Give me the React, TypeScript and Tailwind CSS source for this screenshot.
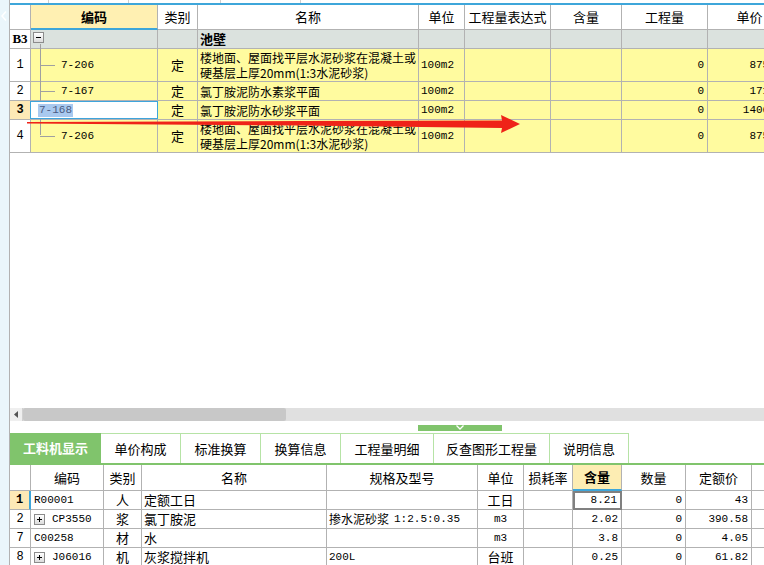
import React from 'react';

const cjk = "font-['Noto_Sans_CJK_SC',sans-serif]";
const mono = "font-['Liberation_Mono','Noto_Sans_CJK_SC',monospace]";
const cell = 'shrink-0 border-r border-b border-[#b2b2b2]';

type TopRow = {
  no: string;
  code: string;
  name: string[];
  h: string;
  price: string;
  editing?: boolean;
  last?: boolean;
};

const topRows: TopRow[] = [
  { no: '1', code: '7-206', name: ['楼地面、屋面找平层水泥砂浆在混凝土或', '硬基层上厚20mm(1:3水泥砂浆)'], h: 'h-[33px]', price: '875.47' },
  { no: '2', code: '7-167', name: ['氯丁胺泥防水素浆平面'], h: 'h-[19px]', price: '171.62' },
  { no: '3', code: '7-168', name: ['氯丁胺泥防水砂浆平面'], h: 'h-[19px]', price: '1406.38', editing: true },
  { no: '4', code: '7-206', name: ['楼地面、屋面找平层水泥砂浆在混凝土或', '硬基层上厚20mm(1:3水泥砂浆)'], h: 'h-[33px]', price: '875.47', last: true },
];

type BottomRow = {
  no: string;
  code: string;
  plus?: boolean;
  kind: string;
  name: string;
  spec: string;
  unit: string;
  monoUnit?: boolean;
  amount: string;
  price: string;
  active?: boolean;
};

const bottomRows: BottomRow[] = [
  { no: '1', code: 'R00001', kind: '人', name: '定额工日', spec: '', unit: '工日', amount: '8.21', price: '43', active: true },
  { no: '2', code: 'CP3550', plus: true, kind: '浆', name: '氯丁胺泥', spec: '掺水泥砂浆 1:2.5:0.35', unit: 'm3', monoUnit: true, amount: '2.02', price: '390.58' },
  { no: '7', code: 'C00258', kind: '材', name: '水', spec: '', unit: 'm3', monoUnit: true, amount: '3.8', price: '4.05' },
  { no: '8', code: 'J06016', plus: true, kind: '机', name: '灰浆搅拌机', spec: '200L', unit: '台班', amount: '0.25', price: '61.82' },
];

const tabs = [
  { label: '工料机显示', w: 'w-[91px]' },
  { label: '单价构成', w: 'w-[80px]' },
  { label: '标准换算', w: 'w-[80px]' },
  { label: '换算信息', w: 'w-[80px]' },
  { label: '工程量明细', w: 'w-[93px]' },
  { label: '反查图形工程量', w: 'w-[116px]' },
  { label: '说明信息', w: 'w-[79px]' },
];

const Box = ({ plus }: { plus?: boolean }) => (
  <span className="relative inline-block w-[11px] h-[11px] shrink-0 border border-[#8c8c8c] bg-gradient-to-b from-white to-[#dcdcdc]">
    <span className="absolute left-[2px] top-[4px] w-[5px] h-px bg-black" />
    {plus && <span className="absolute left-[4px] top-[2px] w-px h-[5px] bg-black" />}
  </span>
);

const TopTable = () => (
  <div className={`${cjk} text-[12px] text-black`}>
    <div className="flex h-[25px] bg-white">
      <div className={`w-[21px] ${cell}`} />
      <div className="w-[127px] shrink-0 border-r border-r-[#b2b2b2] border-b-2 border-b-[#3ea6da] bg-[#fff0b2] flex items-center justify-center text-[13px] font-bold">编码</div>
      <div className={`w-[40px] ${cell} flex items-center justify-center text-[13px]`}>类别</div>
      <div className={`w-[221px] ${cell} flex items-center justify-center text-[13px]`}>名称</div>
      <div className={`w-[46px] ${cell} flex items-center justify-center text-[13px]`}>单位</div>
      <div className={`w-[86px] ${cell} flex items-center justify-center text-[13px]`}>工程量表达式</div>
      <div className={`w-[71px] ${cell} flex items-center justify-center text-[13px]`}>含量</div>
      <div className={`w-[86px] ${cell} flex items-center justify-center text-[13px]`}>工程量</div>
      <div className={`w-[84px] ${cell} flex items-center justify-center text-[13px]`}>单价</div>
    </div>

    <div className="flex h-[19px] bg-[#dbe2de]">
      <div className={`w-[21px] ${cell} bg-white flex items-center justify-center font-['Liberation_Serif',serif] font-bold text-[13px]`}>B3</div>
      <div className={`relative w-[127px] ${cell}`}>
        <span className="absolute left-[2px] top-[2px] flex">
          <Box />
        </span>
        <span className="absolute left-[9px] top-[14px] bottom-[-1px] w-px bg-[#a0a0a0]" />
      </div>
      <div className={`w-[40px] ${cell}`} />
      <div className={`w-[221px] ${cell} flex items-center pl-[2px] font-bold text-[13px]`}>池壁</div>
      <div className={`w-[46px] ${cell}`} />
      <div className={`w-[86px] ${cell}`} />
      <div className={`w-[71px] ${cell}`} />
      <div className={`w-[86px] ${cell}`} />
      <div className={`w-[84px] ${cell}`} />
    </div>

    {topRows.map((r) => (
      <div key={r.no} className={`flex ${r.h} bg-[#fffb9f]`}>
        <div className={`w-[21px] ${cell} flex items-center justify-center ${mono} text-[12px] ${r.editing ? 'bg-[#fde9b6] font-bold' : 'bg-white'}`}>{r.no}</div>
        {r.editing ? (
          <div className="w-[127px] shrink-0 border-b border-[#b2b2b2]">
            <div className="h-full -ml-px border border-[#3ea4dc] bg-white flex items-center pl-[7px]">
              <span className={`${mono} text-[11px] leading-[13px] px-[1px] bg-[#a9c9ef] text-[#4b5b82]`}>{r.code}</span>
            </div>
          </div>
        ) : (
          <div className={`relative w-[127px] ${cell} flex items-center pl-[30px] ${mono} text-[11px]`}>
            <span className={`absolute left-[9px] top-[-1px] w-px bg-[#a0a0a0] ${r.last ? 'h-1/2' : 'bottom-[-1px]'}`} />
            <span className="absolute left-[9px] top-1/2 w-[15px] h-px bg-[#a0a0a0]" />
            {r.code}
          </div>
        )}
        <div className={`w-[40px] ${cell} flex items-center justify-center text-[13px]`}>定</div>
        <div className={`w-[221px] ${cell} flex flex-col justify-center pl-[2px] leading-[15px] whitespace-nowrap overflow-hidden`}>
          {r.name.map((n) => (
            <span key={n} className="block h-[15px]">{n}</span>
          ))}
        </div>
        <div className={`w-[46px] ${cell} flex items-center pl-[2px] ${mono} text-[11px]`}>100m2</div>
        <div className={`w-[86px] ${cell}`} />
        <div className={`w-[71px] ${cell}`} />
        <div className={`w-[86px] ${cell} flex items-center justify-end pr-[3px] ${mono} text-[11px]`}>0</div>
        <div className={`w-[84px] ${cell} flex items-center justify-end pr-[2px] ${mono} text-[11px]`}>{r.price}</div>
      </div>
    ))}
  </div>
);

const BottomTable = () => (
  <div className={`${cjk} text-[13px] text-black`}>
    <div className="flex h-[26px] bg-white">
      <div className={`w-[21px] ${cell}`} />
      <div className={`w-[73px] ${cell} flex items-center justify-center`}>编码</div>
      <div className={`w-[38px] ${cell} flex items-center justify-center`}>类别</div>
      <div className={`w-[185px] ${cell} flex items-center justify-center`}>名称</div>
      <div className={`w-[151px] ${cell} flex items-center justify-center`}>规格及型号</div>
      <div className={`w-[46px] ${cell} flex items-center justify-center`}>单位</div>
      <div className={`w-[49px] ${cell} flex items-center justify-center`}>损耗率</div>
      <div className="w-[49px] shrink-0 border-r border-r-[#b2b2b2] border-b-2 border-b-[#3ea6da] bg-[#fdedb3] flex items-center justify-center font-bold">含量</div>
      <div className={`w-[64px] ${cell} flex items-center justify-center`}>数量</div>
      <div className={`w-[66px] ${cell} flex items-center justify-center`}>定额价</div>
      <div className={`w-[40px] ${cell}`} />
    </div>
    {bottomRows.map((r) => (
      <div key={r.no} className="flex h-[19px] bg-white">
        <div className={`w-[21px] shrink-0 border-b border-[#b2b2b2] flex items-center justify-center ${mono} text-[12px] ${r.active ? 'bg-[#fde9b6] font-bold border-r-2 border-r-[#3ea6da]' : 'border-r'}`}>{r.no}</div>
        <div className={`w-[73px] ${cell} flex items-center gap-[7px] pl-[3px] ${mono} text-[11px]`}>
          {r.plus && <Box plus />}
          {r.code}
        </div>
        <div className={`w-[38px] ${cell} flex items-center justify-center`}>{r.kind}</div>
        <div className={`w-[185px] ${cell} flex items-center pl-[2px]`}>{r.name}</div>
        <div className={`w-[151px] ${cell} flex items-center pl-[2px] text-[12px] whitespace-nowrap`}>
          {r.spec.split(' ').map((s, i) => (
            <span key={s} className={i > 0 || s === '200L' ? `${mono} text-[11px] ml-[5px] first:ml-0` : ''}>{s}</span>
          ))}
        </div>
        <div className={`w-[46px] ${cell} flex items-center justify-center ${r.monoUnit ? `${mono} text-[11px]` : ''}`}>{r.unit}</div>
        <div className={`w-[49px] ${cell}`} />
        <div className={`w-[49px] shrink-0 flex items-center justify-end pr-[3px] ${mono} text-[11px] ${r.active ? 'border-2 border-[#808080]' : 'border-r border-b border-[#b2b2b2]'}`}>{r.amount}</div>
        <div className={`w-[64px] ${cell} flex items-center justify-end pr-[3px] ${mono} text-[11px]`}>0</div>
        <div className={`w-[66px] ${cell} flex items-center justify-end pr-[3px] ${mono} text-[11px]`}>{r.price}</div>
        <div className={`w-[40px] ${cell}`} />
      </div>
    ))}
  </div>
);

export default function App() {
  return (
    <div className="relative flex w-[764px] h-[565px] overflow-hidden bg-white">
      <div className="relative w-[9px] shrink-0 bg-[#eaf6fb]">
        <svg className="absolute left-[1px] top-[11px]" width="6" height="10" viewBox="0 0 6 10">
          <path d="M5 0.5 L1 5 L5 9.5" fill="none" stroke="#ffffff" strokeWidth="1.5" />
        </svg>
      </div>

      <div className="flex flex-col flex-1 min-w-0 overflow-hidden border-l border-[#b2b2b2]">
        <div className="flex h-[3px] shrink-0">
          <div className="w-[39px] border-r border-[#cfcfcf]" />
          <div className="w-[80px] border-r border-[#cfcfcf]" />
          <div className="w-[92px] border-r border-[#cfcfcf]" />
          <div className="w-[80px] border-r border-[#cfcfcf]" />
        </div>
        <div className="h-[2px] shrink-0 bg-[#3ea6da]" />

        <TopTable />

        <div className="h-[255px] shrink-0 bg-white" />

        <div className="flex h-[13px] shrink-0 bg-[#e0e0e0]">
          <div className="w-[13px] flex items-center justify-center bg-[#efefef] border-r border-[#d0d0d0]">
            <svg width="4" height="7" viewBox="0 0 4 7">
              <path d="M4 0 L0 3.5 L4 7 Z" fill="#555" />
            </svg>
          </div>
          <div className="w-[263px] bg-[#c8c8c8] rounded-[2px]" />
        </div>

        <div className="h-[12px] shrink-0 pt-[4px]">
          <div className="ml-[408px] w-[84px] h-[6px] bg-[#80c46c] flex justify-center">
            <svg width="10" height="6" viewBox="0 0 10 6">
              <path d="M1.5 0.5 L5 4 L8.5 0.5" fill="none" stroke="#ffffff" strokeWidth="1.3" />
            </svg>
          </div>
        </div>

        <div className={`flex h-[32px] shrink-0 border-b-2 border-[#80c46c] ${cjk} text-[13px]`}>
          {tabs.map((t, i) => (
            <div
              key={t.label}
              className={`${t.w} shrink-0 flex items-center justify-center ${i === 0 ? 'bg-[#80c46c] text-white font-bold' : 'bg-white text-black border-t border-r border-[#b6e3a6]'}`}
            >
              {t.label}
            </div>
          ))}
        </div>

        <BottomTable />
      </div>

      <svg className="absolute left-0 top-0 pointer-events-none" width="764" height="565" viewBox="0 0 764 565">
        <polygon points="27,122 300,121 502,120.5 501,115 520,124 501,133 502,128 300,125.5 27,123.5" fill="#ef2318" />
      </svg>
    </div>
  );
}
